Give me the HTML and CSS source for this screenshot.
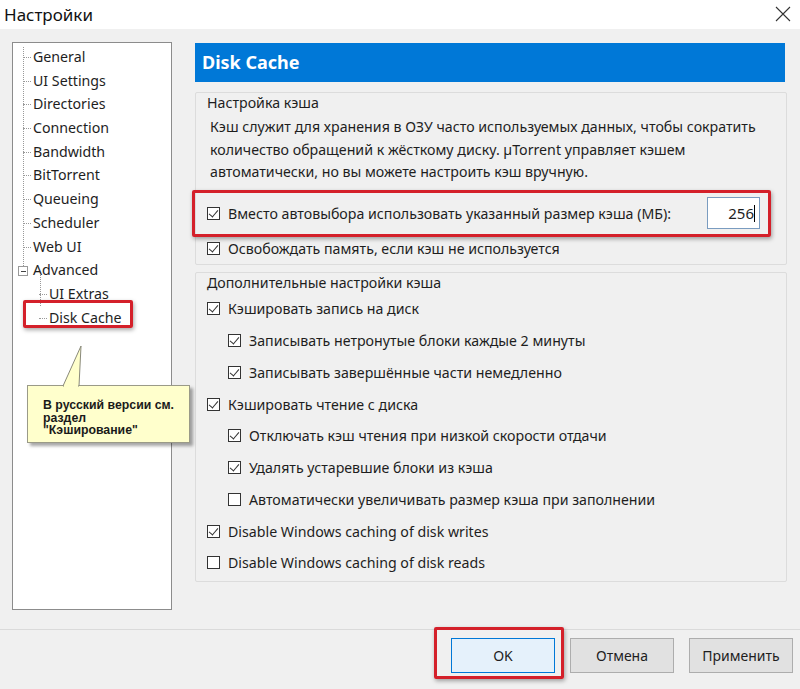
FILE: index.html
```html
<!DOCTYPE html>
<html lang="ru">
<head>
    <meta charset="UTF-8">
    <meta name="viewport" content="width=device-width, initial-scale=1.0">
    <title>Настройки</title>
    <link rel="stylesheet" href="styles.css">
</head>
<body>
    <div class="window">
        <div class="titlebar">
            <span class="title">Настройки</span>
            <svg class="close" width="16" height="16" viewBox="0 0 16 16">
                <path d="M1 1 L15 15 M15 1 L1 15" stroke="#333" stroke-width="1.1" fill="none"/>
            </svg>
        </div>

        <div class="main">
            <div class="tree">
                <ul class="tree-root">
                    <li>General</li>
                    <li>UI Settings</li>
                    <li>Directories</li>
                    <li>Connection</li>
                    <li>Bandwidth</li>
                    <li>BitTorrent</li>
                    <li>Queueing</li>
                    <li>Scheduler</li>
                    <li>Web UI</li>
                    <li class="open"><span class="toggle"></span>Advanced</li>
                </ul>
                <ul class="tree-sub">
                    <li>UI Extras</li>
                    <li class="marked">Disk Cache</li>
                </ul>

                <div class="callout">
                    <svg class="tail" width="30" height="42" viewBox="0 0 30 42">
                        <polygon points="2,41 20,1 18,41" fill="#ffffcc" stroke="#8a8a7a" stroke-width="1"/>
                        <rect x="3" y="40" width="14" height="3" fill="#ffffcc"/>
                    </svg>
                    В русский версии см.<br>раздел<br>"Кэширование"
                </div>
            </div>

            <div class="panel">
                <div class="panel-head">Disk Cache</div>

                <div class="group first">
                    <div class="group-label">Настройка кэша</div>
                    <p class="desc">Кэш служит для хранения в ОЗУ часто используемых данных, чтобы сократить количество обращений к жёсткому диску. µTorrent управляет кэшем автоматически, но вы можете настроить кэш вручную.</p>
                    <div class="row marked-row">
                        <span class="cb on"></span>
                        <span class="label">Вместо автовыбора использовать указанный размер кэша (МБ):</span>
                        <span class="num">256</span>
                    </div>
                    <div class="row short">
                        <span class="cb on"></span>
                        <span class="label">Освобождать память, если кэш не используется</span>
                    </div>
                </div>

                <div class="group second">
                    <div class="group-label">Дополнительные настройки кэша</div>
                    <div class="row"><span class="cb on"></span><span class="label">Кэшировать запись на диск</span></div>
                    <div class="row sub"><span class="cb on"></span><span class="label">Записывать нетронутые блоки каждые 2 минуты</span></div>
                    <div class="row sub"><span class="cb on"></span><span class="label">Записывать завершённые части немедленно</span></div>
                    <div class="row"><span class="cb on"></span><span class="label">Кэшировать чтение с диска</span></div>
                    <div class="row sub"><span class="cb on"></span><span class="label">Отключать кэш чтения при низкой скорости отдачи</span></div>
                    <div class="row sub"><span class="cb on"></span><span class="label">Удалять устаревшие блоки из кэша</span></div>
                    <div class="row sub"><span class="cb"></span><span class="label">Автоматически увеличивать размер кэша при заполнении</span></div>
                    <div class="row"><span class="cb on"></span><span class="label">Disable Windows caching of disk writes</span></div>
                    <div class="row"><span class="cb"></span><span class="label">Disable Windows caching of disk reads</span></div>
                </div>
            </div>
        </div>

        <div class="footer">
            <span class="btn-mark"><button class="btn default">OK</button></span>
            <button class="btn">Отмена</button>
            <button class="btn">Применить</button>
        </div>
    </div>
</body>
</html>
```

FILE: styles.css
```css
body {
    margin: 0;
    background: #f0f0f0;
    font-family: "Noto Sans", "Open Sans", sans-serif;
    font-size: 14.2px;
    color: #1e1e1e;
}
.window {
    width: 800px;
    height: 689px;
    overflow: hidden;
}
.titlebar {
    height: 29px;
    background: #fff;
    display: flex;
    align-items: center;
    justify-content: space-between;
    padding: 0 9px 0 4px;
}
.title {
    font-size: 17px;
    color: #111;
}
.close { margin-top: -1px; }

.main {
    display: flex;
    padding: 13px 0 0 12px;
    height: 568px;
}

/* tree */
.tree {
    position: relative;
    width: 158px;
    height: 566px;
    background: #fff;
    border: 1px solid #8c8c8c;
    flex-shrink: 0;
}
.tree ul {
    list-style: none;
    margin: 0;
    padding: 0;
    position: relative;
}
.tree-root {
    padding: 2px 0 0 20px !important;
}
.tree-root::before {
    content: "";
    position: absolute;
    left: 10px;
    top: 4px;
    height: 225px;
    border-left: 1px dotted #999;
}
.tree-sub {
    padding-left: 36px !important;
}
.tree-sub::before {
    content: "";
    position: absolute;
    left: 27px;
    top: -8px;
    height: 32px;
    border-left: 1px dotted #999;
}
.tree li {
    position: relative;
    height: 23.7px;
    line-height: 23.7px;
    white-space: nowrap;
}
.tree li::before {
    content: "";
    position: absolute;
    left: -10px;
    top: 12px;
    width: 8px;
    border-top: 1px dotted #999;
}
.tree li.open::before { display: none; }
.toggle {
    position: absolute;
    left: -15px;
    top: 8px;
    width: 8px;
    height: 8px;
    border: 1px solid #999;
    background: #fff;
    z-index: 1;
}
.toggle::after {
    content: "";
    position: absolute;
    left: 2px;
    top: 4px;
    width: 5px;
    border-top: 1px solid #444;
}
.tree li.marked::after {
    content: "";
    position: absolute;
    left: -26px;
    top: -6px;
    width: 104px;
    height: 22px;
    border: 3px solid #d4202a;
    border-radius: 2px;
    box-shadow: 1px 2px 4px rgba(0, 0, 0, 0.35);
}

.callout {
    position: absolute;
    left: 14px;
    top: 342px;
    width: 146px;
    height: 38px;
    padding: 13px 0 5px 15px;
    background: #ffffcc;
    border: 1px solid #9a9a88;
    box-shadow: 3px 3px 3px rgba(0, 0, 0, 0.35);
    font-family: "Liberation Sans", Arial, sans-serif;
    font-weight: bold;
    font-size: 12.3px;
    line-height: 12.5px;
    color: #1a1a1a;
}
.callout .tail {
    position: absolute;
    left: 33px;
    top: -41px;
}

/* right panel */
.panel {
    margin: 1px 0 0 23px;
    width: 592px;
}
.panel-head {
    width: 590px;
    height: 39px;
    line-height: 38px;
    background: #0078d7;
    color: #fff;
    font-size: 18px;
    font-weight: bold;
    padding-left: 7px;
    box-sizing: border-box;
}
.group {
    border: 1px solid #dcdcdc;
    border-radius: 2px;
}
.group.first {
    margin-top: 10px;
    height: 173px;
    box-sizing: border-box;
}
.group.second {
    margin-top: 7px;
    height: 310px;
    box-sizing: border-box;
}
.group-label {
    line-height: 20px;
    padding-left: 11px;
    color: #1e1e1e;
}
.desc {
    margin: 3px 0 0 14px;
    line-height: 22.5px;
    width: 565px;
}
.row {
    display: flex;
    align-items: center;
    height: 31.75px;
    padding-left: 11px;
}
.row.sub { padding-left: 32px; }
.row.short { height: 24px; }
.marked-row {
    height: 41px;
    margin: 6px 15px 0 -4px;
    padding-left: 12px;
    padding-right: 8px;
    border: 3px solid #d4202a;
    border-radius: 2px;
    box-shadow: 1px 2px 4px rgba(0, 0, 0, 0.35);
}
.cb {
    position: relative;
    width: 13px;
    height: 13px;
    border: 1px solid #333;
    background: #fff;
    margin-right: 8px;
    flex-shrink: 0;
    box-sizing: border-box;
}
.cb.on::after {
    content: "";
    position: absolute;
    left: 3px;
    top: 0px;
    width: 4px;
    height: 8px;
    border: solid #333;
    border-width: 0 1.3px 1.3px 0;
    transform: rotate(40deg);
}
.label { white-space: nowrap; }
.num {
    margin-left: auto;
    width: 53px;
    height: 32px;
    box-sizing: border-box;
    border: 1px solid #7a9cc0;
    background: #fff;
    text-align: right;
    line-height: 30px;
    padding-right: 4px;
    font-size: 15px;
}
.num::after {
    content: "";
    display: inline-block;
    width: 1px;
    height: 17px;
    background: #000;
    vertical-align: -3px;
}

/* bottom buttons */
.footer {
    margin-top: 19px;
    border-top: 1px solid #dadada;
    padding: 8px 7px 0 0;
    display: flex;
    justify-content: flex-end;
    gap: 15px;
}
.btn {
    width: 104px;
    height: 35px;
    background: #e1e1e1;
    border: 1px solid #adadad;
    font-family: "Noto Sans", "Open Sans", sans-serif;
    font-size: 14px;
    color: #1e1e1e;
    padding: 0;
}
.btn.default {
    background: #e5f1fb;
    border-color: #0078d7;
}
.btn-mark {
    position: relative;
    display: flex;
}
.btn-mark::after {
    content: "";
    position: absolute;
    left: -17px;
    top: -11px;
    right: -9px;
    bottom: -6px;
    border: 3px solid #d4202a;
    border-radius: 2px;
    box-shadow: 1px 2px 4px rgba(0, 0, 0, 0.35);
}
```
